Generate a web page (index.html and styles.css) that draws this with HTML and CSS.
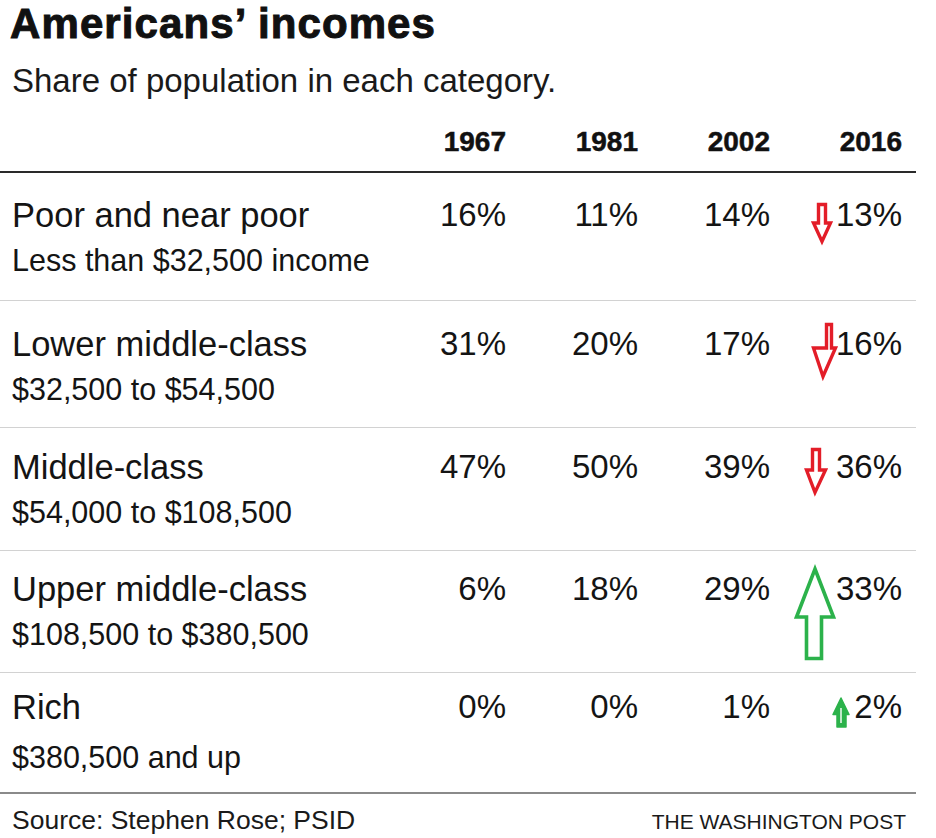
FILE: index.html
```html
<!DOCTYPE html>
<html lang="en">
<head>
<meta charset="utf-8">
<title>Americans’ incomes</title>
<link rel="stylesheet" href="styles.css">
</head>
<body>
<div class="chart">
  <h1 class="title">Americans’ incomes</h1>
  <p class="subtitle">Share of population in each category.</p>

  <div class="grid head">
    <div></div>
    <div class="year">1967</div>
    <div class="year">1981</div>
    <div class="year">2002</div>
    <div class="year">2016</div>
  </div>

  <div class="grid row row-1">
    <div class="label">
      <div class="name">Poor and near poor</div>
      <div class="range">Less than $32,500 income</div>
    </div>
    <div class="val">16%</div>
    <div class="val">11%</div>
    <div class="val">14%</div>
    <div class="val">13%</div>
    <svg class="arrow a1" width="26" height="48" viewBox="0 0 26 48"><polygon points="8.5,4.5 15.5,4.5 15.5,23 20.5,23 12,41.5 3.5,23 8.5,23" fill="#fff" stroke="#e31d28" stroke-width="3.4" stroke-linejoin="miter"/></svg>
  </div>

  <div class="grid row row-2">
    <div class="label">
      <div class="name">Lower middle-class</div>
      <div class="range">$32,500 to $54,500</div>
    </div>
    <div class="val">31%</div>
    <div class="val">20%</div>
    <div class="val">17%</div>
    <div class="val">16%</div>
    <svg class="arrow a2" width="34" height="64" viewBox="0 0 34 64"><polygon points="18.5,6.5 23.5,6.5 23.5,30 27.5,30 15,58.5 5.5,30 18.5,30" fill="#fff" stroke="#e31d28" stroke-width="3.4" stroke-linejoin="miter"/></svg>
  </div>

  <div class="grid row row-3">
    <div class="label">
      <div class="name">Middle-class</div>
      <div class="range">$54,000 to $108,500</div>
    </div>
    <div class="val">47%</div>
    <div class="val">50%</div>
    <div class="val">39%</div>
    <div class="val">36%</div>
    <svg class="arrow a3" width="28" height="52" viewBox="0 0 28 52"><polygon points="8.5,4.5 15.5,4.5 15.5,25 21.5,25 11,47.5 2.5,25 8.5,25" fill="#fff" stroke="#e31d28" stroke-width="3.4" stroke-linejoin="miter"/></svg>
  </div>

  <div class="grid row row-4">
    <div class="label">
      <div class="name">Upper middle-class</div>
      <div class="range">$108,500 to $380,500</div>
    </div>
    <div class="val">6%</div>
    <div class="val">18%</div>
    <div class="val">29%</div>
    <div class="val">33%</div>
    <svg class="arrow a4" width="50" height="102" viewBox="0 0 50 102"><polygon points="25,7 43.5,55 31.5,55 31.5,96.5 16.5,96.5 16.5,55 6.5,55" fill="#fff" stroke="#2cb24b" stroke-width="3.6" stroke-linejoin="miter"/></svg>
  </div>

  <div class="grid row row-5">
    <div class="label">
      <div class="name">Rich</div>
      <div class="range">$380,500 and up</div>
    </div>
    <div class="val">0%</div>
    <div class="val">0%</div>
    <div class="val">1%</div>
    <div class="val">2%</div>
    <svg class="arrow a5" width="22" height="35" viewBox="0 0 22 35"><polygon points="11,3 19,19.5 16,19.5 16,32 7,32 7,19.5 3,19.5" fill="#2cb24b" stroke="#2cb24b" stroke-width="1.5" stroke-linejoin="round"/><line x1="11" y1="13" x2="11" y2="28" stroke="#fff" stroke-width="1.4"/></svg>
  </div>

  <div class="footer">
    <span class="source">Source: Stephen Rose; PSID</span>
    <span class="credit">THE WASHINGTON POST</span>
  </div>
</div>
</body>
</html>
```

FILE: styles.css
```css
html, body {
  margin: 0;
  padding: 0;
  background: #fff;
}

body {
  font-family: "Liberation Sans", Arial, sans-serif;
  color: #141414;
}

.chart {
  width: 916px;
}

.title {
  margin: 1px 0 0 0;
  padding-left: 10px;
  font-size: 42px;
  line-height: 45px;
  font-weight: 700;
  letter-spacing: 1.1px;
  -webkit-text-stroke: 1px #111;
  color: #111;
}

.subtitle {
  margin: 16px 0 0 0;
  padding-left: 12px;
  font-size: 33px;
  line-height: 38px;
  color: #1a1a1a;
}

.grid {
  display: grid;
  grid-template-columns: 1fr repeat(4, 132px);
  padding: 0 14px 0 12px;
}

.head {
  margin-top: 26px;
  padding-bottom: 13px;
  border-bottom: 2px solid #2a2a2a;
}

.year {
  text-align: right;
  font-size: 28px;
  line-height: 32px;
  font-weight: 700;
  -webkit-text-stroke: 0.5px #111;
  color: #111;
}

.row {
  position: relative;
  box-sizing: border-box;
  border-bottom: 1.5px solid #d2d2d2;
}

.row-1 { height: 128px; padding-top: 22px; }
.row-2 { height: 127px; padding-top: 23px; }
.row-3 { height: 123px; padding-top: 19px; }
.row-4 { height: 122px; padding-top: 18px; }
.row-5 { height: 121px; padding-top: 14px; border-bottom: 2px solid #8a8a8a; }

.name {
  font-size: 34.5px;
  line-height: 40px;
  white-space: nowrap;
}

.range {
  margin-top: 7px;
  font-size: 30.5px;
  line-height: 36px;
  white-space: nowrap;
}

.row-5 .range {
  margin-top: 12px;
}

.val {
  text-align: right;
  font-size: 33px;
  line-height: 40px;
}

.arrow {
  position: absolute;
  display: block;
}

.a1 { left: 810px; top: 27px; }
.a2 { left: 808px; top: 17px; }
.a3 { left: 804px; top: 17px; }
.a4 { left: 790px; top: 11px; }
.a5 { left: 830px; top: 22px; }

.footer {
  display: flex;
  justify-content: space-between;
  align-items: baseline;
  padding: 11px 10px 0 12px;
}

.source {
  font-size: 26.5px;
  line-height: 30px;
  color: #1a1a1a;
}

.credit {
  font-size: 21px;
  line-height: 30px;
  color: #1a1a1a;
}
```
